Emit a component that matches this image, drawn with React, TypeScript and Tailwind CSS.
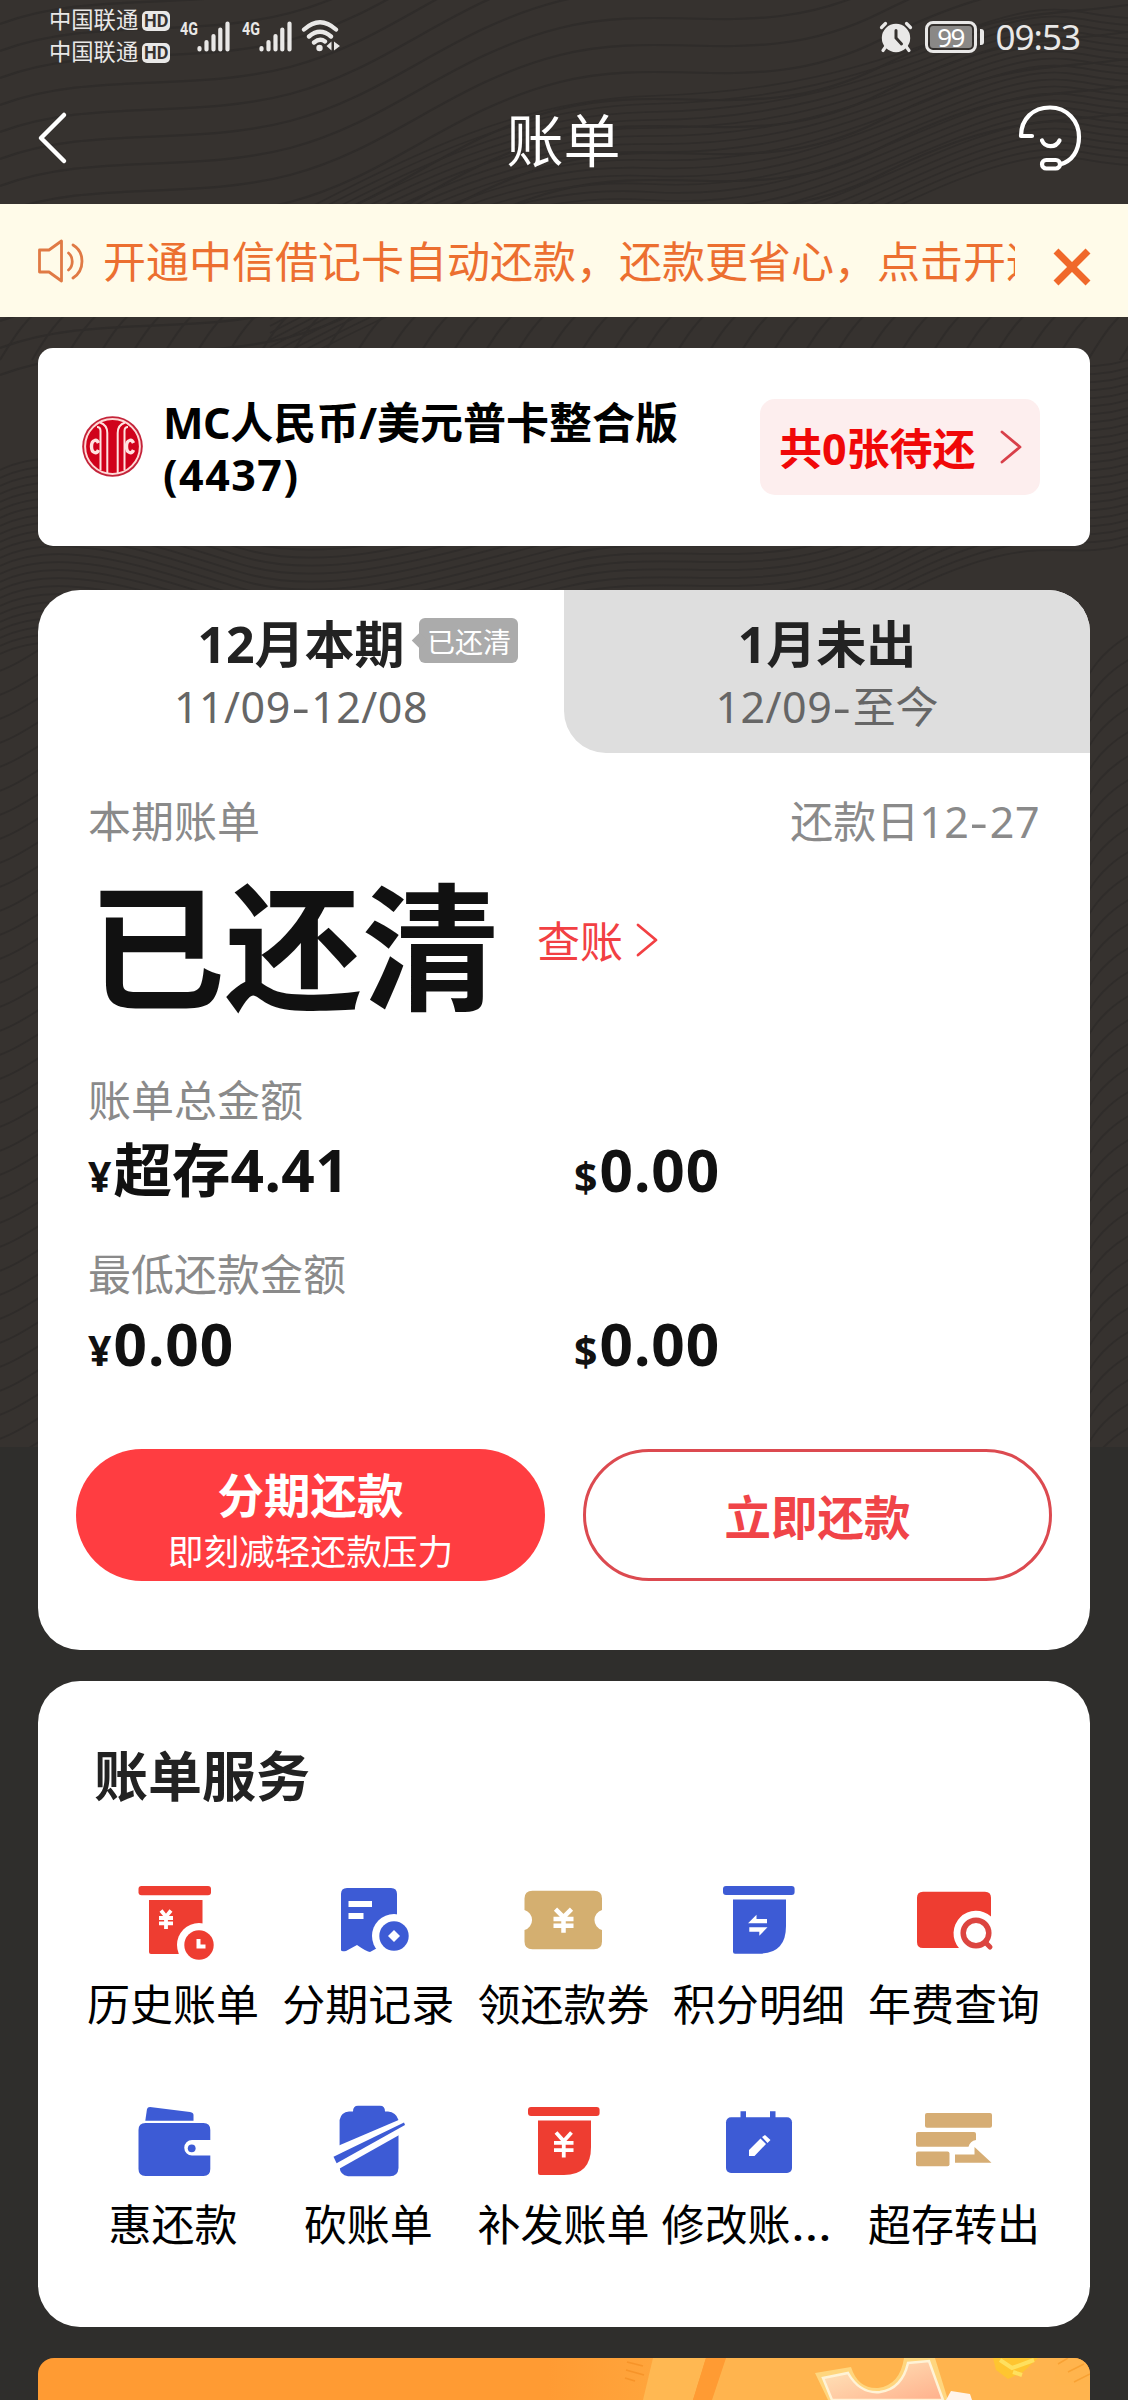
import React from "react";

const RED = "#ee3d31";
const BLUE = "#3d5bd5";
const GOLD = "#d4af70";

function Contours() {
  const lines: React.ReactNode[] = [];
  for (let i = 0; i < 16; i++) {
    const y = -30 + i * 27;
    lines.push(
      <path
        key={"a" + i}
        d={`M0 ${y} C90 ${y - 34} 190 ${y - 12} 290 ${y - 38} S450 ${y - 130} 560 ${y - 158} S760 ${y - 140} 880 ${y - 200} S1040 ${y - 250} 1128 ${y - 262}`}
        strokeWidth={2.2}
      />
    );
  }
  for (let i = 0; i < 22; i++) {
    const y = 110 + i * 7;
    lines.push(
      <path
        key={"b" + i}
        d={`M270 ${y + 118} C420 ${y + 40} 520 ${y - 10} 650 ${y - 14 + i} S860 ${y - 40} 960 ${y - 78} S1070 ${y - 95} 1128 ${y - 92}`}
        strokeWidth={1.6}
      />
    );
  }
  for (let i = 0; i < 44; i++) {
    const x = -160 + i * 32;
    lines.push(<path key={"c" + i} d={`M${x} 360 C${x + 15} 335 ${x + 26} 318 ${x + 50} 300`} strokeWidth={2} />);
  }
  for (let i = 0; i < 24; i++) {
    const y = 470 + i * 8;
    lines.push(
      <path
        key={"d" + i}
        d={`M0 ${y} C60 ${y - 30} 150 ${y + 2} 240 ${y + 30} S440 ${y + 20} 560 ${y - 10} S760 ${y + 10} 900 ${y - 60} S1060 ${y - 90} 1128 ${y - 110}`}
        strokeWidth={1.8}
      />
    );
  }
  for (let i = 0; i < 34; i++) {
    const y = 660 + i * 24;
    lines.push(<path key={"e" + i} d={`M-4 ${y + 12} C10 ${y + 8} 26 ${y - 2} 42 ${y - 12}`} strokeWidth={1.8} />);
    lines.push(<path key={"f" + i} d={`M1086 ${y + 20} C1096 ${y} 1110 ${y - 14} 1132 ${y - 26}`} strokeWidth={1.8} />);
  }
  return (
    <svg className="absolute left-0 top-0 h-[1447px] w-full" viewBox="0 0 1128 1447" fill="none" stroke="#2f2c2a">
      <rect width="1128" height="1447" fill="#36322f" stroke="none" />
      {lines}
    </svg>
  );
}

function Signal() {
  return (
    <svg width="34" height="31" viewBox="0 0 34 31" stroke="#e9e8e7" strokeWidth="4.2" strokeLinecap="round">
      <path d="M2.5 27v1.5M9.5 21v7.5M16.5 15v13.5M23.3 8.500v20M30.500 2.500v26" />
    </svg>
  );
}

function Wifi() {
  return (
    <svg width="40" height="34" viewBox="0 0 40 34" fill="none" stroke="#e9e8e7" strokeWidth="4.300" strokeLinecap="round">
      <path d="M3 10.500Q19 -4 35 10.500M8 17.500Q19 8 30 17.500M13 23.500Q19 18.500 24 22.500" />
      <circle cx="18.500" cy="29" r="3.200" fill="#e9e8e7" stroke="none" />
      <path d="M30.500 22.500v9l-5 -4.500zM33 22.500v9l6 -4.500z" fill="#e9e8e7" stroke="none" />
    </svg>
  );
}

function Alarm() {
  return (
    <svg width="34" height="32" viewBox="0 0 34 32" fill="none" stroke="#e9e8e7" strokeLinecap="round">
      <circle cx="17" cy="17" r="14.200" fill="#e9e8e7" stroke="none" />
      <path d="M2.500 6.500L6.500 2.500M31.500 6.500L27.500 2.500M6.500 26L4 29.500M27.500 26L30 29.500" strokeWidth="3.200" />
      <path d="M17 9.500V17L22.500 23" stroke="#36322f" strokeWidth="3" />
    </svg>
  );
}

function Headset() {
  return (
    <svg width="64" height="68" viewBox="0 0 64 68" fill="none" stroke="#fff" strokeWidth="4.200" strokeLinecap="round" strokeLinejoin="round">
      <path d="M14 32H3C3 15 15 3.500 32 3.500C49 3.500 61 17 61 33C61 47 54 57 42 60.500" />
      <path d="M24 36.500C27 44 38 44 41.500 36.500" />
      <rect x="24" y="56" width="18" height="8.500" rx="4.200" />
    </svg>
  );
}

function Speaker() {
  return (
    <svg width="48" height="44" viewBox="0 0 48 44" fill="none" stroke="#e07a45" strokeWidth="2.800" strokeLinecap="round" strokeLinejoin="round">
      <path d="M2.500 11H12L24.500 2V42L12 33H2.500Z" />
      <path d="M31.500 14C36.500 18 36.500 27 31.500 31M36 6C48 13 48 31 36 39" />
    </svg>
  );
}

function Chevron({ color }: { color: string }) {
  return (
    <svg width="22" height="36" viewBox="0 0 22 36" fill="none" stroke={color} strokeWidth="2.800" strokeLinecap="round" strokeLinejoin="round">
      <path d="M2 3L20 18L2 33" />
    </svg>
  );
}

function BankLogo() {
  return (
    <svg width="61" height="61" viewBox="0 0 61 61" fill="none">
      <circle cx="30.500" cy="30.500" r="30.300" fill="#c4243a" />
      <circle cx="30.500" cy="30.500" r="27.400" fill="#d0021b" stroke="#ffd9d6" strokeWidth="2" />
      <g stroke="#ffe3e0" strokeWidth="2">
        <path d="M18.500 54V15Q18.500 11 15 11M25.300 57V17Q25.300 9 18 6.500M35.700 57V17Q35.700 9 43 6.500M42.500 54V15Q42.500 11 46 11" />
        <path d="M16.500 27Q15 23.500 12.500 24.500Q9.500 25.500 9.500 30.500Q9.500 35.500 12.500 36.500Q15 37.500 16.500 34M51.500 27Q50 23.500 47.500 24.500Q44.500 25.500 44.500 30.500Q44.500 35.500 47.500 36.500Q50 37.500 51.500 34" strokeWidth="3.400" />
      </g>
    </svg>
  );
}

function Yen({ x, y, w, h, s }: { x: number; y: number; w: number; h: number; s: number }) {
  const c = x + w / 2;
  return (
    <path
      d={`M${x + 2} ${y + 1.5}L${c} ${y + h * 0.38}L${x + w - 2} ${y + 1.5}M${x} ${y + h * 0.45}H${x + w}M${x} ${y + h * 0.72}H${x + w}M${c} ${y + h * 0.36}V${y + h}`}
      stroke="#fff"
      strokeWidth={s}
      fill="none"
    />
  );
}

const icons: Record<string, React.ReactNode> = {
  history: (
    <>
      <rect x="4.500" y="6" width="72.500" height="9.300" rx="3" fill={RED} />
      <path d="M15 20H68.500V74H17Q15 74 15 72Z" fill={RED} />
      <Yen x={25} y={29} w={14} h={20} s={3.8} />
      <circle cx="65" cy="65" r="22" fill="#fff" />
      <circle cx="65" cy="65" r="14.700" fill={RED} />
      <path d="M64.500 59V66.500H71.500" stroke="#fff" strokeWidth="4" fill="none" />
    </>
  ),
  record: (
    <>
      <path d="M18 8H62Q68 8 68 14V71L52 66L41 72Q38 72 28 65L17 71Q12 72 12 70V14Q12 8 18 8Z" fill={BLUE} />
      <path d="M19.500 24H43M19.500 36H34.500" stroke="#fff" strokeWidth="5.800" />
      <circle cx="65" cy="56" r="22" fill="#fff" />
      <circle cx="65" cy="56" r="14.700" fill={BLUE} />
      <path d="M65 50L71 56L65 62L59 56Z" fill="#fff" />
    </>
  ),
  coupon: (
    <>
      <path d="M8.500 10.700H70Q78 10.700 78 18.500V30A10.400 10.400 0 0 0 78 50V61.500Q78 69.300 70 69.300H8.500Q.5 69.300 .5 61.500V50A10.400 10.400 0 0 0 .5 30V18.500Q.5 10.700 8.500 10.700Z" fill={GOLD} />
      <Yen x={29.5} y={27.7} w={20} h={25} s={4.5} />
    </>
  ),
  points: (
    <>
      <rect x="4" y="6" width="71.600" height="9" rx="3" fill={BLUE} />
      <path d="M14 19.500H67V46Q67 73.700 40 73.700H16Q14 73.700 14 71.700Z" fill={BLUE} />
      <path d="M29 43.300L37.500 34.700V39H48V43.300ZM48.500 47.300L40.300 55.700V51.700H30.300V47.300Z" fill="#fff" />
    </>
  ),
  fee: (
    <>
      <path d="M9 11.700H71Q77 11.700 77 17.700V36.500A22.500 22.500 0 0 0 45 68H9Q3 68 3 62V17.700Q3 11.700 9 11.700Z" fill={RED} />
      <circle cx="62" cy="53" r="12.800" fill="#fff" stroke="#dc4540" strokeWidth="5.500" />
      <path d="M71 62L76 67" stroke="#dc4540" strokeWidth="5" strokeLinecap="round" />
    </>
  ),
  wallet: (
    <>
      <path d="M11.300 20.700L13 9Q13.500 7 16 7L56 12Q59.500 12.500 59.500 15V20.700Z" fill={BLUE} />
      <path d="M11.500 23H69.500Q76.300 23 76.300 30V40H58A7.500 7.500 0 0 0 58 55.500H76.300V69Q76.300 76 69.500 76H11.500Q4.500 76 4.500 69V30Q4.500 23 11.500 23Z" fill={BLUE} />
      <circle cx="57.700" cy="48.300" r="3.900" fill={BLUE} />
    </>
  ),
  cut: (
    <>
      <path d="M24 11.500Q24 5.700 29 5.700H51Q56 5.700 56 11.500H59Q67 12 69.500 20V68Q69 76.300 61 76.300H19Q11 75 10.600 67V20Q12 12 20 11.500Z" fill={BLUE} />
      <path d="M4 48L72 19V34L8 70Z" fill="#fff" />
      <path d="M4.500 56.700L75 22.500L76 25L7.600 63.300Z" fill={BLUE} />
    </>
  ),
  reissue: (
    <>
      <rect x="4" y="7" width="71.600" height="9" rx="3" fill={RED} />
      <path d="M14 20.500H67V47Q67 75 40 75H16Q14 75 14 73Z" fill={RED} />
      <Yen x={30} y={31} w={19.500} h={26.500} s={3.8} />
    </>
  ),
  edit: (
    <>
      <path d="M21.500 11.300H27V20H21.500ZM51 11.300H56.500V20H51Z" fill={BLUE} />
      <rect x="7" y="17.300" width="66" height="55.700" rx="5" fill={BLUE} />
      <path d="M30 56V50L41.500 38.500L47 44L35.500 56ZM43 37L46 35L51.500 40L48.500 43Z" fill="#fff" />
    </>
  ),
  transfer: (
    <g fill="#d6ad74">
      <rect x="11" y="13" width="67" height="14.700" rx="2" />
      <path d="M4 32H60Q62 32 62 34V40Q56 41 54.500 46.700H4Q2 46.700 2 44.700V34Q2 32 4 32Z" />
      <rect x="2" y="51.500" width="33.500" height="14.700" rx="2" />
      <path d="M41 54.500H60.500V47L77.500 62.800H41Z" />
    </g>
  ),
};

const services: [string, string][] = [
  ["history", "历史账单"],
  ["record", "分期记录"],
  ["coupon", "领还款券"],
  ["points", "积分明细"],
  ["fee", "年费查询"],
  ["wallet", "惠还款"],
  ["cut", "砍账单"],
  ["reissue", "补发账单"],
  ["edit", "修改账…"],
  ["transfer", "超存转出"],
];

function ServiceLabel({ text }: { text: string }) {
  if (text.endsWith("…")) {
    return (
      <div className="mt-[15px] w-full whitespace-nowrap text-left text-[43px] leading-[60px] text-black">
        {text.slice(0, -1)}
        <span className="inline-block origin-left scale-x-[1.2]">…</span>
      </div>
    );
  }
  return <div className="-ml-px mt-[15px] whitespace-nowrap text-[43px] leading-[60px] text-black">{text}</div>;
}

function Carrier() {
  return (
    <div className="flex h-8 items-center gap-[4px]">
      <span className="-mt-[2px] text-[22.300px] leading-8">中国联通</span>
      <span className="flex h-[20px] w-[28px] items-center justify-center rounded-[5px] bg-[#e9e8e7] font-['Roboto',sans-serif] text-[18px] font-bold leading-5 text-[#36322f]">HD</span>
    </div>
  );
}

function Dash() {
  return <span className="mx-[3px] inline-block scale-x-[1.3]">-</span>;
}

function Amount({ symbol, children }: { symbol: string; children: React.ReactNode }) {
  return (
    <div className="-mt-px mb-px h-[70px] w-[486px] shrink-0 whitespace-nowrap text-[58.500px] font-bold leading-[70px] text-[#111]">
      <span className="mr-[2px] text-[41px] leading-none">{symbol}</span>
      {children}
    </div>
  );
}

function PromoBanner() {
  return (
    <div className="mx-[38px] mt-[31px] h-[42px] overflow-hidden rounded-t-[16px] bg-[#ff9b33]">
      <svg width="1052" height="42" viewBox="0 0 1052 42">
        <defs>
          <linearGradient id="fade" x1="0" x2="1">
            <stop offset="0" stopColor="#ff9b33" />
            <stop offset="1" stopColor="#ffa53c" />
          </linearGradient>
          <linearGradient id="ticket" x1="0" x2="1" y1="0" y2="1">
            <stop offset="0" stopColor="#ffe9bd" />
            <stop offset="1" stopColor="#ffb08c" />
          </linearGradient>
        </defs>
        <rect x="510" width="105" height="42" fill="url(#fade)" />
        <path d="M615 0H668L655 42H605Z" fill="#ffb852" />
        <path d="M668 0H688L674 42H655Z" fill="#ff9b33" />
        <path d="M688 0H1052V42H674Z" fill="#ffb44e" />
        <path d="M589 4l16 4M588 12l18 5M587 20l10 3" stroke="#f28b1f" strokeWidth="1.500" opacity=".6" />
        <path d="M1030 14l16 -8M1036 24l16 -8M1020 6l10 -6" stroke="#f59a2a" strokeWidth="1.500" opacity=".7" />
        <path d="M777 15L813 9Q820 31 840 30Q862 27 866 0H897L910 42H790Z" fill="#ffd67e" />
        <path d="M785 20L810 15Q822 36 842 34Q864 31 870 5L891 3L905 42H794Z" fill="url(#ticket)" stroke="#fff3d6" strokeWidth="2.500" />
        <path d="M908 42L913 33L932 36L934 42Z" fill="#fff4ec" />
        <path d="M955 0H1000L985 14L970 21L958 12Z" fill="#ffc530" />
        <path d="M962 2L974 10L996 2M975 14L984 17" stroke="#ffe05e" strokeWidth="4" fill="none" />
      </svg>
    </div>
  );
}

export default function App() {
  return (
    <div className="relative h-[2400px] w-[1128px] overflow-hidden bg-[#2f2e2c] font-['Noto_Sans','Noto_Sans_CJK_SC',sans-serif]" lang="zh-CN">
      <Contours />
      <div className="relative flex flex-col">
        <header className="h-[204px] text-white">
          <div className="flex h-[73px] items-start pl-[49px] pr-[48px] pt-[5px] text-[#e9e8e7]">
            <div>
              <Carrier />
              <Carrier />
            </div>
            <div className="ml-[10px] mt-[14px] flex items-start font-['Roboto',sans-serif] text-[19px] leading-[20px]">
              <span className="w-[17px] origin-left scale-x-75 font-bold">4G</span>
              <div className="mt-[2px]"><Signal /></div>
              <span className="ml-[11px] w-[17px] origin-left scale-x-75 font-bold">4G</span>
              <div className="mt-[2px]"><Signal /></div>
              <div className="ml-[8px]"><Wifi /></div>
            </div>
            <div className="ml-auto mt-[15px] flex items-center">
              <Alarm />
              <div className="ml-[12px] flex h-[32px] w-[52px] items-center justify-center rounded-[8px] border-[3px] border-[#e9e8e7] p-[2px]">
                <div className="flex h-full w-full items-center justify-center rounded-[3px] bg-[#8a8886] text-[26px] leading-5 tracking-[-1.500px] text-white">99</div>
              </div>
              <div className="ml-[3px] h-[16px] w-[4px] rounded-r-[3px] bg-[#e9e8e7]" />
              <span className="ml-[12px] mt-px text-[35px] leading-8 tracking-[-1px]">09:53</span>
            </div>
          </div>
          <div className="flex h-[131px] items-start justify-between pl-[37px] pr-[46px]">
            <svg className="mt-[38px]" width="32" height="54" viewBox="0 0 32 54" fill="none" stroke="#fff" strokeWidth="4.500" strokeLinecap="round" strokeLinejoin="round">
              <path d="M27 4L4 27L27 50" />
            </svg>
            <h1 className="ml-[40px] mt-[31px] text-[57px] leading-[72px]">账单</h1>
            <div className="mt-[31px]"><Headset /></div>
          </div>
        </header>

        <div className="flex h-[113px] items-center bg-[#fffbe9] pl-[37px] pr-[37px] text-[#ec6f30]">
          <div><Speaker /></div>
          <div className="ml-[18px] mt-[3px] w-[912px] overflow-hidden whitespace-nowrap text-[43px] leading-[60px]">开通中信借记卡自动还款，还款更省心，点击开通</div>
          <svg className="ml-[38px] mt-[12px]" width="38" height="38" viewBox="0 0 38 38" stroke="#f0682a" strokeWidth="7">
            <path d="M3 3L35 35M35 3L3 35" />
          </svg>
        </div>

        <section className="mx-[38px] mt-[31px] flex h-[198px] items-center rounded-[15px] bg-white pl-[44px] pr-[50px]">
          <div className="-mt-[2px]"><BankLogo /></div>
          <div className="ml-[20px] mt-[4px] whitespace-nowrap text-[43px] font-bold leading-[52px] text-black">
            <span className="tracking-[-0.500px]">MC</span>人民币/美元普卡整合版
            <br />
            <span className="tracking-[1.500px]">(4437)</span>
          </div>
          <div className="ml-auto flex h-[96px] w-[280px] items-center justify-between rounded-[15px] bg-[#fdeeee] pl-[19px] pr-[18px]">
            <span className="mt-[3px] whitespace-nowrap text-[43px] font-bold leading-[60px] text-[#f00808]">共0张待还</span>
            <Chevron color="#d8404a" />
          </div>
        </section>

        <section className="mx-[38px] mt-[44px] h-[1060px] overflow-hidden rounded-[42px] bg-white">
          <div className="flex h-[163px] text-center leading-[64px]">
            <div className="w-[526px] pt-[22px]">
              <div className="relative mx-auto w-fit text-[50px] font-bold text-[#222]">
                12月本期
                <div className="absolute left-[222px] top-[6px] flex h-[45px] w-[99px] items-center justify-center rounded-[6px] bg-[#ababab] text-[28px] font-normal leading-none text-white">
                  <span className="absolute -left-[5px] top-[17px] h-[11px] w-[11px] rotate-45 bg-[#ababab]" />
                  <span className="relative mt-[3px]">已还清</span>
                </div>
              </div>
              <div className="-mt-px text-[43px] tracking-[0.500px] text-[#666]">11/09<Dash />12/08</div>
            </div>
            <div className="w-[526px] rounded-bl-[42px] bg-[#dedede] pt-[22px]">
              <div className="text-[50px] font-bold text-[#222]">1月未出</div>
              <div className="-mt-px text-[43px] text-[#666]"><span className="tracking-[0.500px]">12/09<Dash /></span>至今</div>
            </div>
          </div>
          <div className="px-[50px] text-[43px] leading-[60px] text-[#8a8a8a]">
            <div className="mt-[39px] flex justify-between">
              <span>本期账单</span>
              <span>还款日<span className="tracking-[0.500px]">12<Dash />27</span></span>
            </div>
            <div className="mt-[27px] flex h-[136px] items-center">
              <span className="text-[137px] font-bold leading-[136px] text-[#111]">已还清</span>
              <span className="ml-[38px] mr-[13px] mt-[-10px] text-[#f24043]">查账</span>
              <div className="mt-[-14px]"><Chevron color="#f24043" /></div>
            </div>
            <div className="mt-[56px]">账单总金额</div>
            <div className="mt-[4px] flex">
              <Amount symbol="¥">超存<span className="tracking-[0.500px]">4.41</span></Amount>
              <Amount symbol="$"><span className="tracking-[1px]">0.00</span></Amount>
            </div>
            <div className="mt-[40px]">最低还款金额</div>
            <div className="mt-[4px] flex">
              <Amount symbol="¥"><span className="tracking-[1px]">0.00</span></Amount>
              <Amount symbol="$"><span className="tracking-[1px]">0.00</span></Amount>
            </div>
          </div>
          <div className="mx-[38px] mt-[70px] flex justify-between text-center">
            <button className="h-[132px] w-[469px] rounded-full bg-[#ff3d41] pt-[15px] text-white">
              <div className="text-[46.500px] font-bold leading-[54px]">分期还款</div>
              <div className="mt-[2px] text-[35.700px] leading-[54px]">即刻减轻还款压力</div>
            </button>
            <button className="h-[132px] w-[469px] rounded-full border-[3px] border-[#dc4a50] pt-[4px] text-[46.500px] font-bold leading-[60px] text-[#f04448]">立即还款</button>
          </div>
        </section>

        <section className="mx-[38px] mt-[31px] h-[646px] rounded-[42px] bg-white px-[38px] pt-[65px]">
          <h2 className="pl-[18px] text-[54px] font-bold leading-[60px] text-[#222]">账单服务</h2>
          <div className="mt-[74px] grid grid-cols-5 gap-y-[65px]">
            {services.map(([key, label]) => (
              <div key={key} className="flex min-w-0 flex-col items-center">
                <svg className="overflow-visible" width="80" height="80" viewBox="0 0 80 80">{icons[key]}</svg>
                <ServiceLabel text={label} />
              </div>
            ))}
          </div>
        </section>

        <PromoBanner />
      </div>
    </div>
  );
}
